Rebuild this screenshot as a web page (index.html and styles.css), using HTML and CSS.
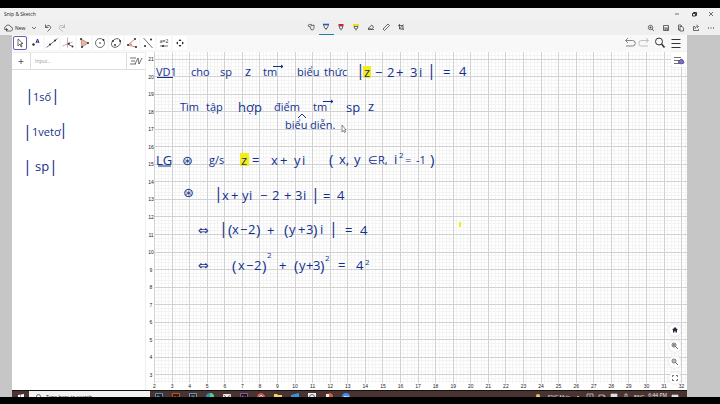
FILE: index.html
```html
<!DOCTYPE html>
<html lang="vi">
<head>
<meta charset="utf-8">
<title>Snip &amp; Sketch</title>
<link rel="stylesheet" href="styles.css">
</head>
<body>
<header class="titlebar">
  <h1>Snip &amp; Sketch</h1>
  <div class="win-controls">
    <button aria-label="Minimize"><svg viewBox="0 0 10 10"><path d="M3 5h4"/></svg></button>
    <button aria-label="Restore"><svg viewBox="0 0 10 10"><path d="M3.5 4.500h3v2.500h-3zM4.500 4.500v-1h3v3h-1" stroke-width="1"/></svg></button>
    <button aria-label="Close"><svg viewBox="0 0 10 10"><path d="M3 3l4 4M7 3l-4 4"/></svg></button>
  </div>
</header>

<nav class="snipbar" aria-label="Snip tools">
  <div class="snip-left">
    <button class="new"><svg viewBox="0 0 10 10"><path d="M3 8h4a2 2 0 0 0 1-4a3 3 0 0 0-5-1a3 3 0 0 0-1 4M3.500 5v3M2 6.500h3"/></svg>New</button>
    <button aria-label="New options"><svg viewBox="0 0 10 10"><path d="M3 4l2 2l2-2"/></svg></button>
    <button aria-label="Undo"><svg viewBox="0 0 10 10"><path d="M2.500 1.500v3h3M2.500 4.500c2-3.500 6-2 5 1L4.500 8.500"/></svg></button>
    <button aria-label="Redo" class="faded"><svg viewBox="0 0 10 10"><path d="M7.500 1.500v3h-3M7.500 4.500c-2-3.500-6-2-5 1L5.500 8.500"/></svg></button>
  </div>
  <div class="snip-mid">
    <button aria-label="Touch writing"><svg viewBox="0 0 10 10"><path d="M2 4c0-2 3-2 4-1M4 4.500l1 3c2 1 3 0 3-2V3L4.500 4M2 4l2 1"/></svg></button>
    <button aria-label="Ballpoint pen" class="picked"><svg viewBox="0 0 10 10"><path d="M2.500 3l1.500 3.500h2L7.500 3M4.500 7.500h1"/><path d="M2 2.500h6" stroke="#245bb5" stroke-width="1.600"/></svg></button>
    <button aria-label="Pencil"><svg viewBox="0 0 10 10"><path d="M3 4l1 3h2l1-3zM4.500 8h1"/><path d="M2.500 3h5" stroke="#c3283c" stroke-width="2"/></svg></button>
    <button aria-label="Highlighter"><svg viewBox="0 0 10 10"><path d="M3 4.500L4 7h2l1-2.500zM4.500 8h1"/><path d="M2 3h6" stroke="#e9e11d" stroke-width="2"/></svg></button>
    <button aria-label="Eraser"><svg viewBox="0 0 10 10"><path d="M2 6.500l4-3.500l1.500 2.500l-2 1.500zM2 7.500h6"/></svg></button>
    <button aria-label="Ruler"><svg viewBox="0 0 10 10"><path d="M2 7l5-5l1.500 1.500l-5 5z"/></svg></button>
    <button aria-label="Crop"><svg viewBox="0 0 10 10"><path d="M3.500 2v5H8M2 3.500h5V8M3.500 7L7.500 2.500"/></svg></button>
  </div>
  <div class="snip-right">
    <button aria-label="Zoom"><svg viewBox="0 0 10 10"><circle cx="4.500" cy="4.500" r="2.200"/><path d="M6 6l2 2M3.500 4.500h2M4.500 3.500v2"/></svg></button>
    <button aria-label="Save"><svg viewBox="0 0 10 10"><path d="M2.500 2.500h5v5h-5zM4 7.500V6h2.500v1.500M2.500 5h5"/></svg></button>
    <button aria-label="Copy"><svg viewBox="0 0 10 10"><path d="M4 3.500h2l1.500 1.500v3H4zM4 7H2.500V2H5l1 1.500"/></svg></button>
    <button aria-label="Share"><svg viewBox="0 0 10 10"><path d="M4 3.500H2.500v4h5V6M4 6c0-2 1-2.500 2.500-2.500M5.500 2L7.500 3.500L6 5"/></svg></button>
    <button aria-label="See more"><svg viewBox="0 0 10 10"><path d="M2 5h1M4.500 5h1M7 5h1" stroke-width="1"/></svg></button>
  </div>
</nav>

<main class="desk">
  <section class="app">
    <nav class="toolbar" aria-label="Geometry tools">
      <button aria-label="Move" class="active"><svg viewBox="0 0 14 14"><path d="M5 3v7l2-2l1 3l1-0.500L8 7.500h2z" fill="#fff"/></svg></button>
      <button aria-label="Point"><svg viewBox="0 0 14 14"><circle cx="4.500" cy="8.500" r="1.200" class="dot"/><path d="M7 7l1.500-4l1.500 4M7.500 6h2" stroke="#2b2b90" stroke-width="1"/></svg></button>
      <button aria-label="Line"><svg viewBox="0 0 14 14"><path d="M1.500 11.500l11-9"/><circle cx="5" cy="8.500" r="1" class="dot"/><circle cx="10" cy="4.500" r="1" class="dot"/></svg></button>
      <button aria-label="Perpendicular line"><svg viewBox="0 0 14 14"><path d="M6.500 1.500v10M1.500 10l10-4" stroke="#b98a85"/><path d="M6.500 8l5 2.500"/><circle cx="8" cy="7.500" r="0.900" class="dot"/><circle cx="11.500" cy="10.500" r="0.900" class="dot"/></svg></button>
      <button aria-label="Polygon"><svg viewBox="0 0 14 14"><path d="M4 3l7 4l-6 4z" fill="#e6b8a5" stroke="#a27767"/><circle cx="4" cy="3" r="1" class="dot"/><circle cx="11" cy="7" r="1" class="dot"/><circle cx="5" cy="11" r="1" class="dot"/></svg></button>
      <button aria-label="Circle"><svg viewBox="0 0 14 14"><circle cx="7" cy="7" r="4.500"/><circle cx="7" cy="7" r="0.800" class="dot"/><circle cx="10.500" cy="4" r="0.900" class="dot"/></svg></button>
      <button aria-label="Ellipse"><svg viewBox="0 0 14 14"><ellipse cx="7" cy="7" rx="5" ry="3.800" transform="rotate(-40 7 7)"/><circle cx="4" cy="5" r="0.900" class="dot"/><circle cx="6" cy="9" r="0.900" class="dot"/><circle cx="11" cy="5" r="0.900" class="dot"/></svg></button>
      <button aria-label="Angle"><svg viewBox="0 0 14 14"><path d="M10 3L3 9l8 2" stroke="#ad5448"/><path d="M6 6.500a4 4 0 0 1 1 3.500L3 9z" fill="#e1a49b" stroke="none"/><circle cx="10" cy="3" r="1" class="dot"/><circle cx="3" cy="9" r="1" class="dot"/><circle cx="11" cy="11" r="1" class="dot"/></svg></button>
      <button aria-label="Reflect"><svg viewBox="0 0 14 14"><path d="M2.500 2l9 10"/><circle cx="10" cy="3.500" r="1" class="dot"/><circle cx="4" cy="10" r="1" class="dot"/></svg></button>
      <button aria-label="Slider" class="slider"><span>a=2</span><svg viewBox="0 0 14 4"><path d="M3 2h8"/><circle cx="6" cy="2" r="1" class="dot"/></svg></button>
      <button aria-label="Move view"><svg viewBox="0 0 14 14"><path d="M7 3l1.500 2h-3zM7 11l1.500-2h-3zM3 7l2-1.500v3zM11 7l-2-1.500v3z" class="dot"/></svg></button>
      <div class="actions">
        <button aria-label="Undo"><svg viewBox="0 0 14 14"><path d="M3 4.500h6.500a2.500 2.500 0 0 1 0 5.500H3M5 2L2.500 4.500L5 7" stroke="#555"/></svg></button>
        <button aria-label="Redo" class="faded"><svg viewBox="0 0 14 14"><path d="M11 4.500H4.500a2.500 2.500 0 0 0 0 5.500H11M9 2l2.500 2.500L9 7"/></svg></button>
        <button aria-label="Search"><svg viewBox="0 0 14 14"><circle cx="6" cy="5.500" r="3.500" stroke-width="1"/><path d="M8.500 8l3 3.500" stroke-width="1.600"/></svg></button>
        <button aria-label="Menu"><svg viewBox="0 0 14 14"><path d="M2.500 3.500h9M2.500 7.500h9M2.500 11.500h9" stroke-width="1"/></svg></button>
      </div>
    </nav>

    <div class="views">
      <aside class="algebra">
        <form class="entry">
          <button type="button" aria-label="Add"><svg viewBox="0 0 14 14"><path d="M4.500 7.500h5M7 5v5"/></svg></button>
          <input type="text" aria-label="Input" placeholder="Input…">
          <button type="button" aria-label="Sort"><svg viewBox="0 0 14 14"><path d="M1 4h6M2 7h4M1 10h6M6 10l3-6l1 6l3-6"/></svg></button>
        </form>
        <svg class="ink notes" viewBox="12 70 134 320" preserveAspectRatio="xMinYMin slice">
          <text class="bar" x="25" y="101">|</text><text x="33" y="101">1số</text><text class="bar" x="51" y="101">|</text>
          <text class="bar" x="23" y="137">|</text><text x="32" y="136">1vetơ</text><text class="bar" x="59" y="135">|</text>
          <text class="bar" x="23" y="172">|</text><text class="math" x="35" y="171">sp</text><text class="bar" x="49" y="172">|</text>
        </svg>
      </aside>

      <div class="graph">
        <svg class="ink plane" viewBox="146 52 541 338" preserveAspectRatio="xMinYMin slice">
          <g id="grid"></g>
          <g id="labels"></g>
          <rect class="mark" x="363" y="66" width="8" height="12"/>
          <rect class="mark" x="240" y="153" width="9" height="13"/>
          <rect class="mark" x="459" y="222" width="2" height="5"/>
          <g>
            <text x="156" y="76">VD1</text><path d="M157 77.500h16"/>
            <text x="191" y="76">cho</text><text x="220" y="76">sp</text><text class="math" x="245" y="76">z</text>
            <text x="263" y="76">tm</text><path d="M273 66.500h10l-2-1.500M283 66.500l-2 1.500"/>
            <text x="297" y="76">biểu</text><text x="324" y="76">thức</text>
            <text class="bar" x="356" y="76">|</text><text class="math" x="364" y="77">z</text><text class="math" x="375" y="77">−</text><text class="math" x="387" y="77">2</text><text class="math" x="396" y="77">+</text><text class="math" x="410" y="77">3</text><text class="math" x="419" y="77">i</text><text class="bar" x="427" y="76">|</text><text class="math" x="443" y="77">=</text><text class="math" x="459" y="76">4</text>
          </g>
          <g>
            <text x="180" y="111">Tìm</text><text x="206" y="111">tập</text><text class="math" x="238" y="112">hợp</text>
            <text x="274" y="111">điểm</text><text x="313" y="111">tm</text><path d="M323 101.500h10l-2-1.500M333 101.500l-2 1.500"/>
            <text class="math" x="346" y="112">sp</text><text class="math" x="368" y="111">z</text>
            <path d="M298 118l4-4l4 4"/>
            <text x="285" y="129">biểu</text><text x="310" y="129">diễn.</text>
          </g>
          <g>
            <text class="math" x="156" y="165">LG</text><path d="M158 166h13"/>
            <text class="sign" x="182" y="165">⊛</text><text x="209" y="164">g/s</text>
            <text class="math" x="241" y="165">z</text><text class="math" x="252" y="165">=</text><text class="math" x="271" y="165">x</text><text class="math" x="280" y="165">+</text><text class="math" x="294" y="165">y</text><text class="math" x="302" y="165">i</text>
            <text class="paren" x="329" y="165">(</text><text class="math" x="339" y="164">x,</text><text class="math" x="354" y="164">y</text><text x="368" y="164">∈</text><text x="378" y="164">R,</text><text class="math" x="394" y="164">i</text><text class="power" x="399" y="158">2</text><text x="405" y="164">=</text><text x="416" y="164">-1</text><text class="paren" x="430" y="165">)</text>
          </g>
          <g>
            <text class="sign" x="183" y="197">⊛</text><text class="bar" x="214" y="199">|</text><text class="math" x="222" y="200">x</text><text class="math" x="231" y="200">+</text><text class="math" x="242" y="200">y</text><text class="math" x="249" y="200">i</text><text class="math" x="260" y="200">−</text><text class="math" x="272" y="200">2</text><text class="math" x="284" y="200">+</text><text class="math" x="295" y="200">3</text><text class="math" x="303" y="200">i</text><text class="bar" x="311" y="200">|</text><text class="math" x="323" y="201">=</text><text class="math" x="337" y="200">4</text>
          </g>
          <g>
            <text class="sign" x="198" y="235">⇔</text><text class="bar" x="219" y="234">|</text><text class="paren" x="228" y="235">(</text><text class="math" x="232" y="234">x</text><text class="math" x="240" y="234">−</text><text class="math" x="248" y="234">2</text><text class="paren" x="256" y="235">)</text><text class="math" x="267" y="235">+</text><text class="paren" x="284" y="235">(</text><text class="math" x="289" y="234">y</text><text class="math" x="298" y="234">+</text><text class="math" x="306" y="234">3</text><text class="paren" x="313" y="235">)</text><text class="math" x="320" y="234">i</text><text class="bar" x="329" y="234">|</text><text class="math" x="345" y="235">=</text><text class="math" x="360" y="235">4</text>
          </g>
          <g>
            <text class="sign" x="198" y="270">⇔</text><text class="paren" x="232" y="271">(</text><text class="math" x="238" y="270">x</text><text class="math" x="246" y="270">−</text><text class="math" x="254" y="270">2</text><text class="paren" x="262" y="271">)</text><text class="power" x="267" y="258">2</text><text class="math" x="279" y="270">+</text><text class="paren" x="294" y="271">(</text><text class="math" x="299" y="270">y</text><text class="math" x="306" y="270">+</text><text class="math" x="313" y="270">3</text><text class="paren" x="320" y="271">)</text><text class="power" x="325" y="261">2</text><text class="math" x="338" y="270">=</text><text class="math" x="356" y="270">4</text><text class="power" x="365" y="265">2</text>
          </g>
          <path class="pointer" d="M342 125v7l1.500-1.500l1 2l1-0.500l-1-2h1.500z"/>
        </svg>
        <button class="style-toggle" aria-label="Graphics style"><svg viewBox="0 0 14 14"><path d="M2 4.500h7M2 7.500h6M2 10.500h6"/><path d="M6 9l3-3l2 1l1 3l-3 1z" fill="#7771c4" stroke="#3d3680"/></svg></button>
        <div class="view-buttons">
          <button aria-label="Home"><svg viewBox="0 0 10 10"><path d="M2 5l3-3l3 3h-1v2.500H5.500V6h-1v1.500H3V5z" class="dot"/></svg></button>
          <button aria-label="Zoom in"><svg viewBox="0 0 10 10"><circle cx="4" cy="4" r="2"/><path d="M5.500 5.500L8 8M3 4h2M4 3v2"/></svg></button>
          <button aria-label="Zoom out"><svg viewBox="0 0 10 10"><circle cx="4" cy="4" r="2"/><path d="M5.500 5.500L8 8M3 4h2"/></svg></button>
          <button aria-label="Full screen"><svg viewBox="0 0 10 10"><path d="M2.500 4V2.500H4M6 2.500h1.500V4M7.500 6v1.500H6M4 7.500H2.500V6"/></svg></button>
        </div>
      </div>
    </div>

    <footer class="taskbar">
      <button class="start" aria-label="Start"><svg viewBox="0 0 8 8"><path d="M1 2l2.500-0.500V4.500H1zM4 1.500L7 1v3.500H4zM1 5h2.500v3H1zM4 5h3v3H4z" fill="#fff" stroke="none"/></svg></button>
      <label class="search"><svg viewBox="0 0 8 8"><circle cx="4.500" cy="3.500" r="2"/><path d="M3 5L1 7"/></svg><input type="text" placeholder="Type here to search"></label>
      <div class="apps">
        <button aria-label="Photoshop"><svg viewBox="0 0 8 8"><path d="M0.500 0.500h7v7h-7z" fill="#122637" stroke="#79b8d7"/><path d="M2 6V3h2v1.500H2M5 5h1.500" stroke="#79b8d7"/></svg></button>
        <button aria-label="Illustrator"><svg viewBox="0 0 8 8"><path d="M0.500 0.500h7v7h-7z" fill="#36190d" stroke="#d47542"/><path d="M2 6l1-3l1 3M6 3v3" stroke="#d47542"/></svg></button>
        <button aria-label="Lightroom"><svg viewBox="0 0 8 8"><path d="M0.500 0.500h7v7h-7z" fill="#1a2c3d" stroke="#9ab9cc"/><path d="M2 3h4M4 3v3" stroke="#9ab9cc"/></svg></button>
        <button aria-label="Edge"><svg viewBox="0 0 8 8"><circle cx="4" cy="4" r="4" fill="#248dd6" stroke="none"/><path d="M4 0a4 4 0 0 1 4 4H4z" fill="#59ce74" stroke="none"/></svg></button>
        <button aria-label="Mail"><svg viewBox="0 0 8 8"><path d="M0 1h8v6H0z" fill="#eee5dc" stroke="none"/><path d="M0.500 2l3.500 3l3.500-3"/></svg></button>
        <button aria-label="Premiere"><svg viewBox="0 0 8 8"><path d="M0.500 0.500h7v7h-7z" fill="#201029" stroke="#a278b5"/><path d="M2 6V3h1.500M5 3v3" stroke="#c397d6"/></svg></button>
        <button aria-label="Chrome"><svg viewBox="0 0 8 8"><circle cx="4" cy="4" r="3.500" fill="#e4bd31" stroke="none"/><path d="M0.500 4a3.500 3.500 0 0 1 7 0z" fill="#e05040" stroke="none"/><circle cx="4" cy="4" r="1.500" fill="#3976dc" stroke="#fff"/></svg></button>
        <button aria-label="File Explorer"><svg viewBox="0 0 8 8"><path d="M0 1h3l1 1h4v5H0z" fill="#f2d464" stroke="none"/><path d="M1 4.500h6" stroke="#3c86c4"/></svg></button>
        <button aria-label="Photos"><svg viewBox="0 0 8 8"><path d="M0 2l8-2v7H0z" fill="#3794df" stroke="none"/><path d="M0 6l3-2l5 2" stroke="#17569c"/></svg></button>
        <button aria-label="GeoGebra"><svg viewBox="0 0 8 8"><path d="M0 0h8v8H0z" fill="#eee" stroke="none"/><circle cx="4" cy="4" r="2.500"/></svg></button>
        <button aria-label="PowerPoint"><svg viewBox="0 0 8 8"><path d="M1 1h3v6H1z" fill="#f3eee9" stroke="none"/><path d="M4 0a4 4 0 0 1 0 8z" fill="#d56237" stroke="none"/></svg></button>
        <button aria-label="Zoom meeting"><svg viewBox="0 0 8 8"><circle cx="4" cy="4" r="4" fill="#438bec" stroke="none"/><path d="M2 3.500h3v2H2zM5.500 4l1-0.500v2" stroke="#fff"/></svg></button>
      </div>
      <div class="tray">
        <svg viewBox="0 0 8 8"><circle cx="3" cy="3" r="2" fill="#efc348" stroke="none"/><path d="M2 5c2-3 5-1 5 1v1H2z" fill="#ddd" stroke="none"/></svg>
        <span>32°C Mưa</span>
        <svg viewBox="0 0 8 8"><path d="M2 5l2-2l2 2"/></svg>
        <svg viewBox="0 0 8 8"><path d="M1 1h6v5H1zM3 3h2"/></svg>
        <svg viewBox="0 0 8 8"><path d="M1 2h5v4H1zM6 3h1v2"/></svg>
        <svg viewBox="0 0 8 8"><path d="M1 1h6v6H1z" fill="#ddd"/></svg>
        <svg viewBox="0 0 8 8"><path d="M3 1h2v4H3zM4 5v2"/></svg>
        <span>ENG</span>
        <time>6:44 PM</time>
        <svg viewBox="0 0 8 8"><path d="M1 2h6v4H1z" fill="#ddd"/></svg>
      </div>
    </footer>
  </section>
</main>
<script src="grid.js"></script>
</body>
</html>
```
FILE: styles.css
```css
* { box-sizing: border-box; }

body {
  margin: 0;
  height: 100vh;
  display: flex;
  flex-direction: column;
  padding: 8px 0 7px;
  background: #000;
  color: #222;
  font-family: "Open Sans", "Noto Sans", sans-serif;
  font-size: 5px;
  overflow: hidden;
}

button {
  display: inline-flex;
  align-items: center;
  justify-content: center;
  padding: 0;
  border: 0;
  background: none;
  color: inherit;
  font: inherit;
}

svg { fill: none; stroke: #333; stroke-width: 0.7; }
.dot { fill: #282838; stroke: none; }
.faded { opacity: 0.4; }

.titlebar {
  display: flex;
  justify-content: space-between;
  align-items: center;
  flex: none;
  height: 12px;
  padding: 0 4px;
  background: #f1f1f1;
}
.titlebar h1 { margin: 0; font-size: 5px; font-weight: 400; }
.win-controls { display: flex; gap: 7px; }
.win-controls svg, .snipbar svg { width: 10px; height: 10px; }

.snipbar {
  display: grid;
  grid-template-columns: 1fr auto 1fr;
  flex: none;
  height: 15px;
  background: #efefef;
}
.snip-left, .snip-mid, .snip-right { display: flex; }
.snip-left { gap: 4px; padding-left: 3px; }
.snip-left .new { gap: 2px; }
.snip-mid { padding-right: 8px; }
.snip-mid button { width: 15px; border-bottom: 1px solid transparent; }
.snip-mid .picked { border-color: #287ea8; }
.snip-right { justify-content: flex-end; gap: 5px; padding-right: 4px; }

.desk {
  flex: 1;
  min-height: 0;
  display: flex;
  padding: 0 33px 0 12px;
  background: #c6c6c6;
}
.app { flex: 1; min-width: 0; display: flex; flex-direction: column; }

.toolbar {
  display: flex;
  align-items: center;
  gap: 2px;
  flex: none;
  height: 17px;
  padding: 0 4px 1px 1px;
  background: #f9f8f9;
}
.toolbar > button { width: 14px; height: 14px; background: #fff; border-radius: 1px; }
.toolbar svg { width: 14px; height: 14px; }
.toolbar .active { border: 1px solid #6560b5; border-radius: 2px; }
.toolbar .active svg { margin: -1px; }
.toolbar .slider { flex-direction: column; line-height: 5px; }
.toolbar .slider svg { height: 4px; }
.actions { display: flex; margin-left: auto; }
.actions button:nth-child(n+3) { margin-left: 2px; }

.views { flex: 1; min-height: 0; display: flex; }
.algebra {
  flex: none;
  width: 134px;
  display: flex;
  flex-direction: column;
  background: #fff;
  border-right: 1px solid #eee;
}
.entry {
  display: flex;
  align-items: center;
  flex: none;
  height: 18px;
  border-top: 1px solid #eee;
  border-bottom: 1px solid #ddd;
}
.entry button { width: 18px; }
.entry svg { width: 14px; height: 14px; }
.entry input {
  flex: 1;
  min-width: 0;
  height: 16px;
  padding: 0 4px;
  border: 0;
  border-left: 1px solid #ddd;
  border-right: 1px solid #ddd;
  outline: 0;
  font: inherit;
}
.entry input::placeholder { color: #999; }

.graph { flex: 1; min-width: 0; position: relative; background: #fff; }

.ink { flex: 1; min-height: 0; display: block; width: 100%; stroke: #12318f; stroke-width: 1; }
.plane { height: 100%; }
.ink text {
  fill: #12318f;
  stroke: none;
  font-family: "Open Sans", "Noto Sans", "DejaVu Sans", sans-serif;
  font-size: 11px;
}
.ink .math { font-size: 13px; }
.ink .power { font-size: 8px; }
.ink .bar { font-size: 16px; }
.ink .paren { font-size: 15px; }
.ink .sign { font-family: "DejaVu Sans", sans-serif; font-size: 13px; }
.ink .mark { fill: #f5ee12; stroke: none; }
.ink .pointer { fill: #fff; stroke: #444; stroke-width: 0.6; }
.ink .minor { stroke: #f4f4f4; }
.ink .major { stroke: #d2d2d2; }
#labels text {
  fill: #222;
  font-family: "Liberation Sans", sans-serif;
  font-size: 5px;
  text-anchor: middle;
}

.style-toggle {
  position: absolute;
  top: 0;
  right: 0;
  width: 16px;
  height: 15px;
  background: #fff;
  border-radius: 0 0 0 2px;
  box-shadow: 0 0 1px #aaa;
}
.style-toggle svg { width: 14px; height: 14px; }
.view-buttons {
  position: absolute;
  right: 6px;
  bottom: 6px;
  display: flex;
  flex-direction: column;
  gap: 4px;
}
.view-buttons button {
  width: 12px;
  height: 12px;
  border-radius: 50%;
  background: #fff;
  box-shadow: 0 0 2px #ccc;
}
.view-buttons svg { width: 10px; height: 10px; }

.taskbar {
  display: flex;
  align-items: flex-start;
  flex: none;
  height: 7px;
  overflow: hidden;
  background: #4a3431;
  border-top: 1px solid #171010;
}
.taskbar button, .taskbar .search, .tray { padding-top: 2px; }
.taskbar svg { flex: none; width: 8px; height: 8px; }
.start { width: 17px; }
.search {
  display: flex;
  align-items: center;
  gap: 4px;
  width: 121px;
  padding-left: 5px;
  background: #f1f1f1;
}
.search input {
  flex: 1;
  min-width: 0;
  height: 8px;
  padding: 0;
  border: 0;
  background: none;
  font: inherit;
}
.search input::placeholder { color: #222; }
.apps { display: flex; gap: 9px; padding-left: 5px; }
.tray {
  display: flex;
  gap: 4px;
  margin-left: auto;
  padding-right: 8px;
  color: #eee;
  line-height: 8px;
}
.tray svg { stroke: #ddd; }
.tray time { line-height: 4px; }
```
FILE: grid.js
```js
// Draws the graph paper and its axis numbers.
const NS = "http://www.w3.org/2000/svg";
const LEFT = 154.500, TOP = 59.300, UNIT = 17.570, ROW = 17.520, RIGHT = 687, BOTTOM = 383;
const grid = document.getElementById("grid");
const labels = document.getElementById("labels");

function line(d, cls) {
  const p = document.createElementNS(NS, "path");
  p.setAttribute("d", d);
  p.setAttribute("class", cls);
  grid.append(p);
}

function label(x, y, value) {
  const t = document.createElementNS(NS, "text");
  t.setAttribute("x", x);
  t.setAttribute("y", y);
  t.textContent = value;
  labels.append(t);
}

for (const cls of ["minor", "major"]) {
  const parts = cls === "minor" ? 5 : 1;
  for (let i = 0; LEFT + i * UNIT / parts < RIGHT; i++) {
    const x = Math.floor(LEFT + i * UNIT / parts) + 0.5;
    line(`M${x} 52V${BOTTOM}`, cls);
  }
  for (let i = -Math.floor(parts / 3); TOP + i * ROW / parts < BOTTOM; i++) {
    const y = Math.floor(TOP + i * ROW / parts) + 0.5;
    line(`M${LEFT} ${y}H${RIGHT}`, cls);
  }
}

for (let n = 2; n <= 32; n++) label(LEFT + (n - 2) * UNIT, 388, n);
for (let n = 21; n >= 3; n--) label(151, TOP + (21 - n) * ROW + 2, n);
```
